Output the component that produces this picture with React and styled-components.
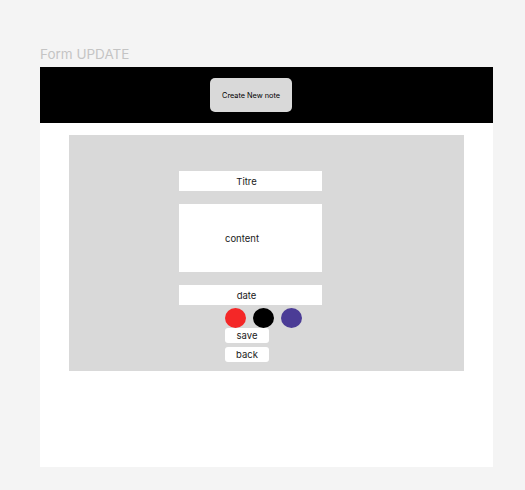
import React from "react";
import styled, { createGlobalStyle } from "styled-components";

const Global = createGlobalStyle`
  html, body { margin: 0; padding: 0; background: #f4f4f4; }
  body { font-family: Inter, "Noto Sans", sans-serif; }
`;

const Page = styled.div`
  width: 525px;
  height: 490px;
  padding: 45px 0 0 40px;
  box-sizing: border-box;
`;

const PageTitle = styled.div`
  font-size: 13.5px;
  line-height: 18px;
  color: #c4c4c4;
  height: 22px;
`;

const Frame = styled.div`
  width: 453px;
  height: 400px;
  background: #ffffff;
  display: flex;
  flex-direction: column;
`;

const Header = styled.div`
  height: 56px;
  background: #000000;
  display: flex;
  align-items: center;
  padding-left: 170px;
`;

const CreateButton = styled.button`
  width: 82px;
  height: 34px;
  border: none;
  border-radius: 5px;
  background: #d9d9d9;
  color: #000;
  font-family: Inter, "Noto Sans", sans-serif;
  font-size: 7.3px;
  padding: 0;
`;

const Panel = styled.div`
  margin: 12px 0 0 29px;
  width: 395px;
  height: 236px;
  background: #d9d9d9;
  box-sizing: border-box;
  padding: 36px 0 0 110px;
  display: flex;
  flex-direction: column;
  align-items: flex-start;
`;

const Field = styled.div`
  width: 143px;
  height: ${(p) => p.$h}px;
  background: #ffffff;
  display: flex;
  align-items: center;
  justify-content: ${(p) => (p.$left ? "flex-start" : "center")};
  padding: ${(p) => (p.$left ? "0 0 0 46px" : "0 8px 0 0")};
  box-sizing: border-box;
  font-size: 9.5px;
  color: #1a1a1a;
  margin-bottom: ${(p) => p.$mb}px;
`;

const Controls = styled.div`
  margin-left: 46px;
  display: flex;
  flex-direction: column;
  align-items: flex-start;
`;

const Swatches = styled.div`
  display: flex;
  gap: 7px;
  margin-top: 3px;
`;

const Swatch = styled.div`
  width: 21px;
  height: 20px;
  border-radius: 50%;
  background: ${(p) => p.$c};
`;

const SmallButton = styled.div`
  width: 44px;
  height: 15px;
  margin-top: ${(p) => p.$mt}px;
  background: #ffffff;
  border-radius: 3px;
  font-size: 9.5px;
  color: #1a1a1a;
  display: flex;
  align-items: center;
  justify-content: center;
`;

export default function App() {
  return (
    <>
      <Global />
      <Page>
        <PageTitle>Form UPDATE</PageTitle>
        <Frame>
          <Header>
            <CreateButton>Create New note</CreateButton>
          </Header>
          <Panel>
            <Field $h={20} $mb={13}>Titre</Field>
            <Field $h={68} $mb={13} $left>content</Field>
            <Field $h={20} $mb={0}>date</Field>
            <Controls>
              <Swatches>
                <Swatch $c="#f42727" />
                <Swatch $c="#000000" />
                <Swatch $c="#4b3c96" />
              </Swatches>
              <SmallButton $mt={0}>save</SmallButton>
              <SmallButton $mt={4}>back</SmallButton>
            </Controls>
          </Panel>
        </Frame>
      </Page>
    </>
  );
}
